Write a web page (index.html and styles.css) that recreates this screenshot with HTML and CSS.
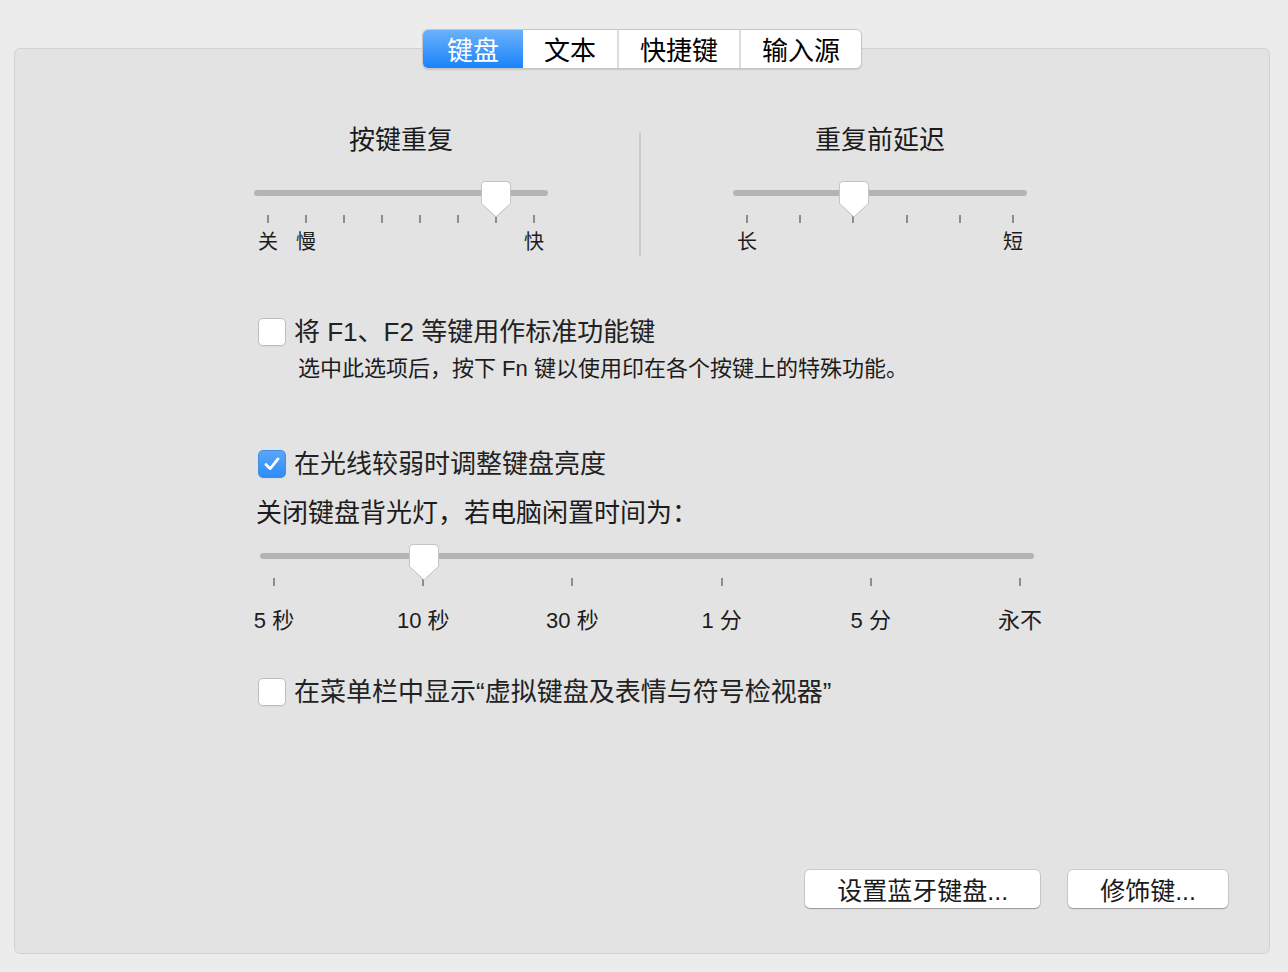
FILE: index.html
```html
<!DOCTYPE html>
<html lang="zh-CN">
<head>
  <meta charset="UTF-8" />
  <meta name="viewport" content="width=device-width, initial-scale=1.0"/>
  <title>键盘</title>
  <link rel="stylesheet" href="styles.css">
</head>
<body>
  <div class="window">
    <div class="panel">
      <nav class="tabs">
        <a class="tab active">键盘</a>
        <a class="tab">文本</a>
        <a class="tab">快捷键</a>
        <a class="tab">输入源</a>
      </nav>

      <!-- 按键重复 / 重复前延迟 -->
      <section class="repeat">
        <div class="col">
          <h2>按键重复</h2>
          <div class="slider">
            <div class="rail">
              <div class="track"></div>
              <svg class="thumb" style="left: 227px" viewBox="0 0 30 36"><path d="M4.5 0.5H25.5A4 4 0 0 1 29.5 4.5V22.5L15.8 35.2Q15 35.8 14.2 35.2L0.5 22.5V4.5A4 4 0 0 1 4.5 0.5Z"/></svg>
            </div>
            <div class="stops">
              <div class="stop"><i></i><span>关</span></div>
              <div class="stop"><i></i><span>慢</span></div>
              <div class="stop"><i></i></div>
              <div class="stop"><i></i></div>
              <div class="stop"><i></i></div>
              <div class="stop"><i></i></div>
              <div class="stop"><i></i></div>
              <div class="stop"><i></i><span>快</span></div>
            </div>
          </div>
        </div>
        <div class="divider"></div>
        <div class="col">
          <h2>重复前延迟</h2>
          <div class="slider">
            <div class="rail">
              <div class="track"></div>
              <svg class="thumb" style="left: 106px" viewBox="0 0 30 36"><path d="M4.5 0.5H25.5A4 4 0 0 1 29.5 4.5V22.5L15.8 35.2Q15 35.8 14.2 35.2L0.5 22.5V4.5A4 4 0 0 1 4.5 0.5Z"/></svg>
            </div>
            <div class="stops">
              <div class="stop"><i></i><span>长</span></div>
              <div class="stop"><i></i></div>
              <div class="stop"><i></i></div>
              <div class="stop"><i></i></div>
              <div class="stop"><i></i></div>
              <div class="stop"><i></i><span>短</span></div>
            </div>
          </div>
        </div>
      </section>

      <section class="options">
        <label class="check">
          <span class="box"></span>
          <span>将 F1、F2 等键用作标准功能键</span>
        </label>
        <p class="hint">选中此选项后，按下 Fn 键以使用印在各个按键上的特殊功能。</p>

        <label class="check check-gap">
          <span class="box checked">
            <svg viewBox="0 0 28 28"><path d="M7.5 14.5L12 19L20.5 8.5"/></svg>
          </span>
          <span>在光线较弱时调整键盘亮度</span>
        </label>
        <p class="idle">关闭键盘背光灯，若电脑闲置时间为：</p>

        <div class="slider wide">
          <div class="rail">
            <div class="track"></div>
            <svg class="thumb" style="left: 149px" viewBox="0 0 30 36"><path d="M4.5 0.5H25.5A4 4 0 0 1 29.5 4.5V22.5L15.8 35.2Q15 35.8 14.2 35.2L0.5 22.5V4.5A4 4 0 0 1 4.5 0.5Z"/></svg>
          </div>
          <div class="stops">
            <div class="stop"><i></i><span>5 秒</span></div>
            <div class="stop"><i></i><span>10 秒</span></div>
            <div class="stop"><i></i><span>30 秒</span></div>
            <div class="stop"><i></i><span>1 分</span></div>
            <div class="stop"><i></i><span>5 分</span></div>
            <div class="stop"><i></i><span>永不</span></div>
          </div>
        </div>

        <label class="check menu-check">
          <span class="box"></span>
          <span>在菜单栏中显示“虚拟键盘及表情与符号检视器”</span>
        </label>
      </section>

      <div class="actions">
        <button>设置蓝牙键盘...</button>
        <button>修饰键...</button>
      </div>
    </div>
  </div>
</body>
</html>
```

FILE: styles.css
```css
:root {
  --page-bg: #ececec;
  --panel-bg: #e3e3e3;
  --panel-border: #d2d2d2;
  --text: #1c1c1c;
  --track: #b4b4b4;
  --tick: #8e8e8e;
  --blue-top: #6bb2fa;
  --blue-bottom: #1a82fb;
}

html, body {
  margin: 0;
  height: 100%;
}

body {
  font-family: "Liberation Sans", "Noto Sans CJK SC", sans-serif;
  background: var(--page-bg);
  color: var(--text);
}

.window {
  box-sizing: border-box;
  height: 972px;
  padding: 48px 18px 18px 14px;
}

.panel {
  box-sizing: border-box;
  height: 100%;
  background: var(--panel-bg);
  border: 1px solid var(--panel-border);
  border-radius: 6px;
  display: flex;
  flex-direction: column;
}

/* segmented tabs */
.tabs {
  align-self: center;
  margin-top: -20px;
  display: flex;
  height: 40px;
  box-sizing: border-box;
  background: #fff;
  border: 1px solid #c6c6c6;
  border-radius: 6px;
  overflow: hidden;
  box-shadow: 0 1px 1px rgba(0, 0, 0, 0.12);
}

.tab {
  display: flex;
  align-items: center;
  padding: 0 21px 1px;
  font-size: 26px;
  color: #000;
  border-left: 2px solid #dcdcdc;
}

.tab:first-child {
  border-left: none;
  padding: 0 24px 1px;
}

.tab.active {
  color: #fff;
  background: linear-gradient(var(--blue-top), var(--blue-bottom));
}

.tab.active + .tab {
  border-left: none;
}

/* slider columns */
.repeat {
  display: flex;
  margin-top: 55px;
  padding-left: 239px;
}

.col {
  width: 294px;
  display: flex;
  flex-direction: column;
}

.col h2 {
  margin: 0 0 25px;
  font-size: 26px;
  font-weight: normal;
  line-height: 32px;
  text-align: center;
  color: #1a1a1a;
}

.divider {
  width: 2px;
  margin: 8px 92px -2px 91px;
  background: #cbcbcb;
}

.slider {
  display: flex;
  flex-direction: column;
}

.rail {
  position: relative;
  height: 34px;
}

.track {
  margin-top: 9px;
  height: 6px;
  border-radius: 3px;
  background: var(--track);
}

.thumb {
  position: absolute;
  top: 0;
  width: 30px;
  height: 36px;
  filter: drop-shadow(0 0.5px 0.5px rgba(0, 0, 0, 0.15));
}

.thumb path {
  fill: #fff;
  stroke: #c4c4c4;
  stroke-width: 1;
}

.stops {
  display: flex;
  justify-content: space-between;
  padding: 0 14px;
}

.stop {
  width: 0;
  display: flex;
  flex-direction: column;
  align-items: center;
}

.stop i {
  display: block;
  width: 2px;
  height: 8px;
  background: var(--tick);
}

.stop span {
  margin-top: 7px;
  font-size: 20px;
  line-height: 24px;
  white-space: nowrap;
}

/* checkbox options */
.options {
  display: flex;
  flex-direction: column;
  align-items: flex-start;
  margin-top: 64px;
  padding-left: 243px;
}

.check {
  display: flex;
  align-items: center;
  gap: 8px;
  font-size: 26px;
  line-height: 28px;
  color: #222;
}

.box {
  box-sizing: border-box;
  width: 28px;
  height: 28px;
  background: #fff;
  border: 1px solid #bdbdbd;
  border-radius: 5px;
  box-shadow: 0 1px 0 rgba(0, 0, 0, 0.04);
}

.box.checked {
  border-color: #3c8fe6;
  background: linear-gradient(#58a6fa, #2e8cf5);
}

.box svg {
  display: block;
  width: 26px;
  height: 26px;
}

.box svg path {
  fill: none;
  stroke: #fff;
  stroke-width: 3;
  stroke-linecap: round;
  stroke-linejoin: round;
}

.hint {
  margin: 10px 0 0 40px;
  font-size: 22px;
  line-height: 26px;
}

.check-gap {
  margin-top: 68px;
}

.idle {
  margin: 20px 0 0 -2px;
  font-size: 26px;
  line-height: 30px;
}

.slider.wide {
  width: 774px;
  margin: 16px 0 0 2px;
}

.slider.wide .stop span {
  margin-top: 22px;
  font-size: 22px;
  line-height: 26px;
}

.menu-check {
  margin-top: 44px;
}

/* bottom buttons */
.actions {
  margin-top: auto;
  margin-bottom: 45px;
  padding-right: 41px;
  display: flex;
  justify-content: flex-end;
  gap: 28px;
}

.actions button {
  height: 38px;
  padding: 0 32px;
  font-family: inherit;
  font-size: 25px;
  color: #1a1a1a;
  background: #fff;
  border: none;
  border-radius: 5px;
  box-shadow: 0 0 0 1px rgba(0, 0, 0, 0.1), 0 1px 1px rgba(0, 0, 0, 0.25);
}
```
